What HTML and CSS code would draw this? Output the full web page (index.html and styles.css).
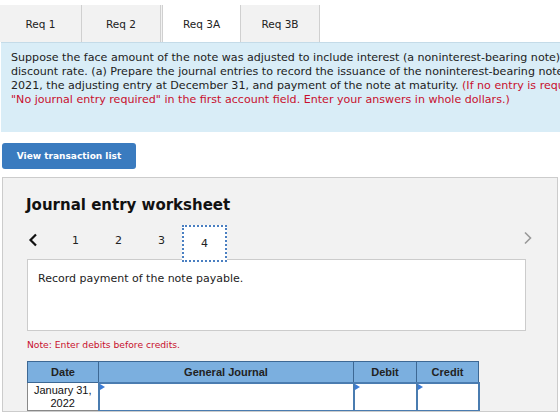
FILE: index.html
```html
<!DOCTYPE html>
<html lang="en">
<head>
  <meta charset="UTF-8">
  <title>Req 3A – Journal entry worksheet</title>
  <link rel="stylesheet" href="styles.css">
</head>
<body>
  <nav class="tabs">
    <div class="tab tab-1">Req 1</div>
    <div class="tab tab-2">Req 2</div>
    <div class="tab tab-3a active">Req 3A</div>
    <div class="tab tab-3b">Req 3B</div>
  </nav>

  <section class="info">
    <p>Suppose the face amount of the note was adjusted to include interest (a noninterest-bearing note) at a 12%</p>
    <p>discount rate. (a) Prepare the journal entries to record the issuance of the noninterest-bearing note on November 1,</p>
    <p>2021, the adjusting entry at December 31, and payment of the note at maturity. <span class="warn">(If no entry is required for a transaction/event, select</span></p>
    <p class="warn">"No journal entry required" in the first account field. Enter your answers in whole dollars.)</p>
  </section>

  <button class="btn-list">View transaction list</button>

  <main class="worksheet">
    <h2 class="ws-title">Journal entry worksheet</h2>

    <div class="pager">
      <span class="arrow prev">
        <svg width="10" height="14" viewBox="0 0 10 14"><path d="M8 1.5 L2.5 7 L8 12.5" fill="none" stroke="#111" stroke-width="2.2"/></svg>
      </span>
      <span class="page">1</span>
      <span class="page">2</span>
      <span class="page">3</span>
      <span class="page current">4</span>
      <span class="arrow next">
        <svg width="10" height="14" viewBox="0 0 10 14"><path d="M2 1.5 L7.5 7 L2 12.5" fill="none" stroke="#999" stroke-width="1.6"/></svg>
      </span>
    </div>

    <div class="entry-box">Record payment of the note payable.</div>

    <p class="note">Note: Enter debits before credits.</p>

    <table class="journal">
      <thead>
        <tr>
          <th class="c-date">Date</th>
          <th class="c-gj">General Journal</th>
          <th class="c-dr">Debit</th>
          <th class="c-cr">Credit</th>
        </tr>
      </thead>
      <tbody>
        <tr>
          <td class="c-date">January 31,<br>2022</td>
          <td class="cell-input"></td>
          <td class="cell-input"></td>
          <td class="cell-input"></td>
        </tr>
        <tr>
          <td class="c-date"></td>
          <td class="cell-input"></td>
          <td class="cell-input"></td>
          <td class="cell-input"></td>
        </tr>
      </tbody>
    </table>
  </main>
</body>
</html>
```

FILE: styles.css
```css
*{box-sizing:border-box;margin:0;padding:0}
html,body{height:100%;overflow:hidden}
body{
  font-family:"DejaVu Sans",Verdana,sans-serif;
  font-size:11px;color:#222;background:#fff;
}

/* tabs */
.tabs{display:flex;margin-top:5px;height:37px}
.tab{
  display:flex;align-items:center;justify-content:center;
  background:#f2f2f2;border-right:1px solid #d0d0d0;
  font-size:10.5px;color:#222;
}
.tab-1{width:82px}
.tab-2{width:81px;border-right:3px double #d0d0d0}
.tab-3a{width:77px}
.tab-3b{width:80px;border-left:1px solid #d0d0d0}
.tab.active{background:#fff;border-right:none}

/* instructions */
.info{
  background:#d9edf7;border-top:1px solid #c4dbe8;
  margin-left:1px;height:90px;padding:8px 0 0 10px;
  overflow:hidden;
}
.info p{line-height:14px;white-space:nowrap;font-size:11.1px}
.warn{color:#c8102e}

.btn-list{
  display:block;margin:11px 0 0 2px;width:134px;height:26px;
  background:#3a7bbf;color:#fff;border:none;border-radius:3px;
  font-family:"DejaVu Sans",Verdana,sans-serif;font-weight:bold;font-size:9px;
}

/* worksheet */
.worksheet{
  margin:8px 2px 0;height:235px;overflow:hidden;
  background:#f2f2f2;border:1px solid #ccc;
  padding:0 0 0 24px;
}
.ws-title{font-size:15px;font-weight:bold;color:#111;margin:18px 0 0 -1px;line-height:18px}

.pager{display:flex;align-items:flex-end;height:48px;width:506px}
.pager .page{width:43px;text-align:center;font-size:11px;padding-bottom:15px}
.pager .arrow{display:flex;padding-bottom:15px}
.pager .prev{margin:0 16px 0 1px}
.pager .current{
  width:45px;height:37px;padding:0;margin-left:-1px;
  display:flex;align-items:center;justify-content:center;
  background:#fff;border:2px dotted #4a7fc1;
}
.pager .next{margin-left:auto;padding-bottom:17px}

.entry-box{
  width:499px;height:72px;margin-top:-3px;
  background:#fff;border:1px solid #ccc;
  padding:12px 0 0 10px;font-size:11px;color:#222;
}

.note{color:#c8102e;font-size:9.2px;margin:8px 0 0 0;line-height:12px}

.journal{
  border-collapse:collapse;margin-top:10px;
  font-family:"Liberation Sans",Arial,sans-serif;font-size:11px;
}
.journal th{
  background:#7bafdf;color:#222;font-weight:bold;height:21px;
  border:1px solid #3d6894;font-size:11px;
}
.journal td{height:28px;border:1px solid #3d6894;background:#fff}
.journal td.c-date{text-align:center;line-height:13px;border-color:#888;color:#111}
.c-date{width:71px}
.c-gj{width:255px}
.c-dr{width:63px}
.c-cr{width:62px}
.cell-input{position:relative;border:2px solid #4a7cb0 !important}
.cell-input::before{
  content:"";position:absolute;left:0;top:0;
  border-top:3px solid transparent;border-bottom:3px solid transparent;
  border-left:5px solid #3a7bd5;
}
```
